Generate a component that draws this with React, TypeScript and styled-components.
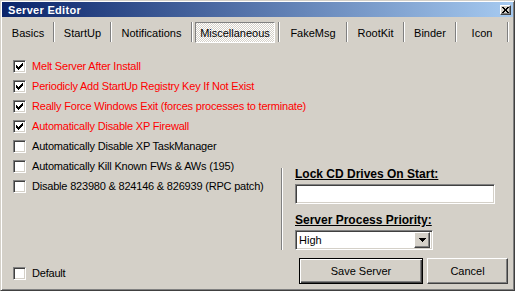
import React from 'react';
import styled, { createGlobalStyle, css } from 'styled-components';

const Global = createGlobalStyle`
  html, body { margin: 0; padding: 0; background: #d4d0c8; }
  body { font-family: "Liberation Sans", Arial, sans-serif; font-size: 11px; color: #000; }
  * { box-sizing: border-box; }
`;

const raised = css`
  border: 1px solid;
  border-color: #ffffff #404040 #404040 #ffffff;
  box-shadow: inset -1px -1px #808080, inset 1px 1px #d4d0c8;
  background: #d4d0c8;
`;

const sunken = css`
  border: 1px solid;
  border-color: #808080 #ffffff #ffffff #808080;
  box-shadow: inset 1px 1px #404040, inset -1px -1px #d4d0c8;
  background: #ffffff;
`;

const Window = styled.div`
  width: 515px;
  height: 291px;
  background: #d4d0c8;
  border: 1px solid;
  border-color: #d4d0c8 #404040 #404040 #d4d0c8;
  box-shadow: inset 1px 1px #ffffff, inset -1px -1px #808080;
  padding: 1px;
  display: flex;
  flex-direction: column;
`;

const TitleBar = styled.div`
  height: 15px;
  flex: none;
  display: flex;
  align-items: center;
  justify-content: space-between;
  padding: 0 2px 0 6px;
  background: linear-gradient(to right, #0a246a, #a6caf0);
`;

const Title = styled.span`
  color: #ffffff;
  font-weight: bold;
  font-size: 11px;
  letter-spacing: 0.3px;
`;

const CloseButton = styled.div`
  ${raised};
  width: 11px;
  height: 10px;
  display: flex;
  align-items: center;
  justify-content: center;
`;

const TabBar = styled.div`
  height: 29px;
  flex: none;
  display: flex;
  align-items: flex-start;
  padding: 5px 0 0 1px;
`;

const Tab = styled.div<{ $w: number }>`
  width: ${(p) => p.$w}px;
  height: 21px;
  display: flex;
  align-items: center;
  justify-content: center;
  white-space: nowrap;
`;

const PressedButton = styled.div`
  width: 80px;
  height: 21px;
  margin-left: 2px;
  margin-right: 3px;
  display: flex;
  align-items: center;
  justify-content: center;
  border: 1px solid;
  border-color: #808080 #ffffff #ffffff #808080;
  background-color: #d4d0c8;
  background-image: conic-gradient(#ffffff 25%, #d4d0c8 0 50%, #ffffff 0 75%, #d4d0c8 0);
  background-size: 2px 2px;
`;

const TabSep = styled.div`
  width: 2px;
  height: 20px;
  border-left: 1px solid #808080;
  border-right: 1px solid #ffffff;
`;

const Main = styled.div`
  flex: 1;
  display: flex;
`;

const CheckList = styled.div`
  width: 279px;
  padding: 10px 0 0 11px;
  display: flex;
  flex-direction: column;
`;

const CheckRow = styled.div<{ $red?: boolean }>`
  height: 20px;
  display: flex;
  align-items: center;
  gap: 6px;
  white-space: nowrap;
  letter-spacing: -0.2px;
  color: ${(p) => (p.$red ? '#ff0000' : '#000000')};
`;

const Box = styled.div`
  ${sunken};
  width: 13px;
  height: 13px;
  flex: none;
  display: flex;
  align-items: center;
  justify-content: center;
`;

const RightPanel = styled.div`
  align-self: flex-end;
  display: flex;
  margin-bottom: 6px;
`;

const VSep = styled.div`
  width: 2px;
  border-left: 1px solid #808080;
  border-right: 1px solid #ffffff;
`;

const Fields = styled.div`
  margin-left: 12px;
  width: 200px;
  display: flex;
  flex-direction: column;
`;

const FieldLabel = styled.div<{ $gap: number }>`
  margin-top: ${(p) => p.$gap}px;
  height: 13px;
  line-height: 13px;
  font-size: 12px;
  font-weight: bold;
  text-decoration: underline;
  white-space: nowrap;
`;

const TextBox = styled.div`
  ${sunken};
  margin-top: 3px;
  width: 200px;
  height: 20px;
`;

const Select = styled.div`
  ${sunken};
  margin-top: 3px;
  width: 138px;
  height: 20px;
  display: flex;
  align-items: center;
  justify-content: space-between;
  padding: 0 2px 0 3px;
`;

const DropButton = styled.div`
  ${raised};
  width: 16px;
  height: 16px;
  display: flex;
  align-items: center;
  justify-content: center;
`;

const Footer = styled.div`
  height: 33px;
  flex: none;
  display: flex;
  align-items: flex-start;
  padding: 2px 5px 0 11px;
`;

const DefaultRow = styled(CheckRow)`
  margin-top: 5px;
  flex: 1;
`;

const Button = styled.div<{ $w: number; $default?: boolean }>`
  width: ${(p) => p.$w}px;
  height: 26px;
  display: flex;
  align-items: center;
  justify-content: center;
  background: #d4d0c8;
  ${(p) =>
    p.$default
      ? css`
          border: 1px solid #000000;
          box-shadow: inset 1px 1px #ffffff, inset -1px -1px #404040, inset -2px -2px #808080;
        `
      : css`
          border: 1px solid;
          border-color: #ffffff #404040 #404040 #ffffff;
          box-shadow: inset -1px -1px #808080;
        `}
`;

const Buttons = styled.div`
  display: flex;
  gap: 4px;
`;

const Check = () => (
  <svg width="9" height="9" viewBox="0 0 9 9" shapeRendering="crispEdges">
    {[2, 3, 4, 3, 2, 1, 0].map((y, i) => (
      <rect key={i} x={1 + i} y={1 + y} width={1} height={3} fill="#000" />
    ))}
  </svg>
);

const CheckBox = ({ checked }: { checked?: boolean }) => <Box>{checked && <Check />}</Box>;

const tabs: { label: string; w: number; active?: boolean }[] = [
  { label: 'Basics', w: 50 },
  { label: 'StartUp', w: 55 },
  { label: 'Notifications', w: 79 },
  { label: 'Miscellaneous', w: 85, active: true },
  { label: 'FakeMsg', w: 66 },
  { label: 'RootKit', w: 55 },
  { label: 'Binder', w: 50 },
  { label: 'Icon', w: 50 },
];

const options: { label: string; checked?: boolean }[] = [
  { label: 'Melt Server After Install', checked: true },
  { label: 'Periodicly Add StartUp Registry Key If Not Exist', checked: true },
  { label: 'Really Force Windows Exit (forces processes to terminate)', checked: true },
  { label: 'Automatically Disable XP Firewall', checked: true },
  { label: 'Automatically Disable XP TaskManager' },
  { label: 'Automatically Kill Known FWs & AWs (195)' },
  { label: 'Disable 823980 & 824146 & 826939 (RPC patch)' },
];

export default function App() {
  return (
    <>
      <Global />
      <Window>
        <TitleBar>
          <Title>Server Editor</Title>
          <CloseButton>
            <svg width="7" height="6" viewBox="0 0 7 6" shapeRendering="crispEdges">
              <path d="M0 0h2v1h-2zM5 0h2v1h-2zM1 1h2v1h-2zM4 1h2v1h-2zM2 2h3v1h-3zM2 3h3v1h-3zM1 4h2v1h-2zM4 4h2v1h-2zM0 5h2v1h-2zM5 5h2v1h-2z" fill="#000" />
            </svg>
          </CloseButton>
        </TitleBar>
        <TabBar>
          {tabs.map((t) => (
            <React.Fragment key={t.label}>
              <Tab $w={t.w}>{t.active ? <PressedButton>{t.label}</PressedButton> : t.label}</Tab>
              <TabSep />
            </React.Fragment>
          ))}
        </TabBar>
        <Main>
          <CheckList>
            {options.map((o) => (
              <CheckRow key={o.label} $red={o.checked}>
                <CheckBox checked={o.checked} />
                {o.label}
              </CheckRow>
            ))}
          </CheckList>
          <RightPanel>
            <VSep />
            <Fields>
              <FieldLabel $gap={0}>Lock CD Drives On Start:</FieldLabel>
              <TextBox />
              <FieldLabel $gap={10}>Server Process Priority:</FieldLabel>
              <Select>
                <span>High</span>
                <DropButton>
                  <svg width="7" height="4" viewBox="0 0 7 4" shapeRendering="crispEdges">
                    <path d="M0 0h7v1h-7zM1 1h5v1h-5zM2 2h3v1h-3zM3 3h1v1h-1z" fill="#000" />
                  </svg>
                </DropButton>
              </Select>
            </Fields>
          </RightPanel>
        </Main>
        <Footer>
          <DefaultRow>
            <CheckBox />
            Default
          </DefaultRow>
          <Buttons>
            <Button $w={124} $default>Save Server</Button>
            <Button $w={81}>Cancel</Button>
          </Buttons>
        </Footer>
      </Window>
    </>
  );
}
